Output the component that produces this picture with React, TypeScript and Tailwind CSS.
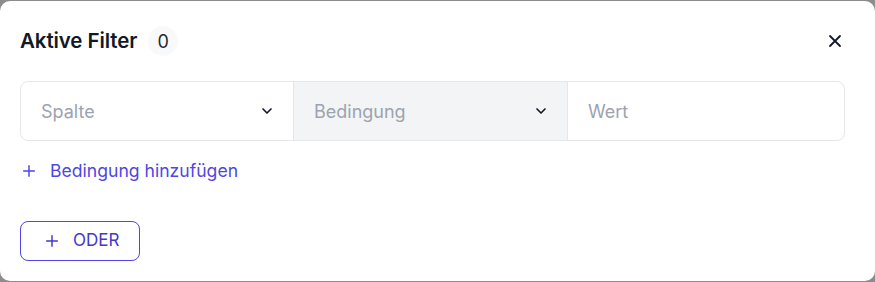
import React from "react";

function Chevron() {
  return (
    <svg width="16" height="16" viewBox="0 0 24 24" fill="none" stroke="#111827" strokeWidth="2.5" strokeLinecap="round" strokeLinejoin="round">
      <path d="M6 9l6 6 6-6" />
    </svg>
  );
}

function Plus({ size = 16 }: { size?: number }) {
  return (
    <svg width={size} height={size} viewBox="0 0 24 24" fill="none" stroke="currentColor" strokeWidth="2.2" strokeLinecap="round">
      <path d="M12 4v16M4 12h16" />
    </svg>
  );
}

export default function App() {
  return (
    <div className="w-[875px] h-[282px] bg-[#8c8c8c] pt-px overflow-hidden" style={{ fontFamily: "Inter, 'Noto Sans', sans-serif" }}>
      <div className="h-[280px] bg-white rounded-[10px] pl-5 pr-[30px] pt-[25px]">
        <div className="flex items-center justify-between h-[30px]">
          <div className="flex items-center gap-[11px]">
            <span className="text-[20.5px] font-semibold text-[#111827] tracking-[-0.1px]">Aktive Filter</span>
            <span className="w-[30px] h-[30px] rounded-full bg-[#f8f9fb] flex items-center justify-center text-[18px] text-[#1f2937]">0</span>
          </div>
          <svg width="14" height="14" viewBox="0 0 14 14" fill="none" stroke="#111827" strokeWidth="1.8" strokeLinecap="round" className="mr-[3px]">
            <path d="M2 2l10 10M12 2L2 12" />
          </svg>
        </div>
        <div className="mt-[25px] flex h-[60px] border border-[#e5e7eb] rounded-[8px] overflow-hidden text-[18px] text-[#9ca3af]">
          <div className="w-[273px] flex items-center justify-between pl-5 pr-[18px] border-r border-[#e5e7eb]">
            <span>Spalte</span>
            <Chevron />
          </div>
          <div className="w-[274px] flex items-center justify-between pl-5 pr-[18px] bg-[#f3f4f6] border-r border-[#e5e7eb]">
            <span>Bedingung</span>
            <Chevron />
          </div>
          <div className="flex-1 flex items-center pl-5">
            <span>Wert</span>
          </div>
        </div>
        <div className="mt-[18px] flex items-center gap-[13px] text-[#4f46e5] text-[17.6px] pl-[1px] h-[24px]">
          <Plus size={16} />
          <span>Bedingung hinzufügen</span>
        </div>
        <button className="mt-[38px] w-[120px] h-[40px] border border-[#4f46e5] rounded-[8px] flex items-center gap-[13px] pl-[23px] text-[#4338ca] text-[17px]">
          <Plus size={16} />
          <span>ODER</span>
        </button>
      </div>
    </div>
  );
}
